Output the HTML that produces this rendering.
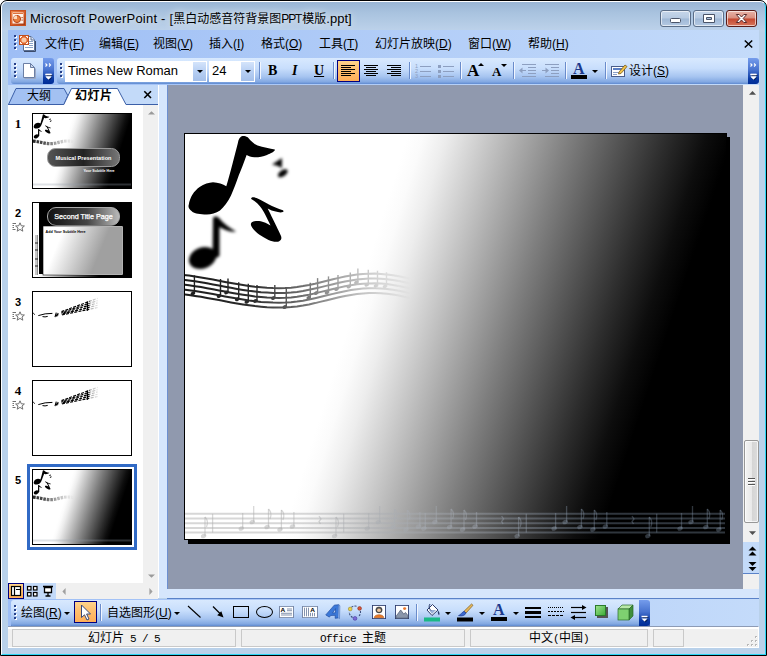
<!DOCTYPE html>
<html lang="zh-CN">
<head>
<meta charset="utf-8">
<title>Microsoft PowerPoint - [黑白动感音符背景图PPT模版.ppt]</title>
<style>
*{box-sizing:border-box;margin:0;padding:0}
html,body{width:767px;height:656px;overflow:hidden;background:#fff}
body{position:relative;font-family:"Liberation Sans","Noto Sans CJK SC",sans-serif;font-size:12px;color:#000}
.abs{position:absolute}
#frame{position:absolute;left:0;top:0;width:767px;height:656px;border:1px solid #000;border-radius:7px 7px 0 0;
 background:linear-gradient(#98b4d4 0px,#a9c3df 12px,#bdd2ea 30px,#b9d1ea 31px);overflow:hidden}
#frame:before{content:"";position:absolute;left:0;top:0;right:0;bottom:0;border:1px solid #fff;border-right-color:#2ad6f5;border-bottom-color:#2ad6f5;border-radius:6px 6px 0 0}
#title{text-shadow:0 0 7px rgba(255,255,255,.75),0 0 12px rgba(255,255,255,.5);left:30px;top:10px;font-size:12px;line-height:18px;white-space:nowrap;letter-spacing:0px}
.cap{position:absolute;top:10px;height:17px;width:31px;border:1px solid #5b6e88;border-radius:3px;
 background:linear-gradient(#c6d6ea 0,#b6cae2 48%,#9fb8d6 52%,#b4c9e2 100%);box-shadow:inset 0 0 0 1px rgba(255,255,255,.6)}
.cap.close{background:linear-gradient(#e8b4a8 0,#d98d7d 48%,#c4472f 52%,#d7765c 100%);border-color:#5a1c18}
#menubar{left:8px;top:30px;width:751px;height:28px;background:linear-gradient(90deg,#9ebef5,#c4dbfa)}
.mi{position:absolute;top:36px;font-size:12px;line-height:16px;white-space:nowrap}
.mi u{text-decoration:underline;text-underline-offset:1px}
#tbdock{left:8px;top:58px;width:751px;height:27px;background:linear-gradient(90deg,#9ebef5,#c4dbfa)}
.tb{position:absolute;top:58px;height:26px;border-radius:3px 0 0 3px;background:linear-gradient(#d8e9fe 0,#c8defc 40%,#a6c4f0 72%,#82a8e2 92%,#5f8ad0 100%)}
.ovf{position:absolute;top:58px;height:26px;width:11px;border-radius:0 3px 3px 0;background:linear-gradient(#759cec 0,#4873cf 45%,#0a3aa4 80%,#002d96 100%)}
.grip{position:absolute;width:3px}
.grip i{display:block;width:2px;height:2px;background:#27418a;margin-bottom:2px;box-shadow:1px 1px 0 #fff}
.sep{position:absolute;width:1px;background:#6a8ccb;box-shadow:1px 0 0 #f1f6ff}
#work{left:167px;top:85px;width:576px;height:504px;background:#9099ae;border-left:1px solid #6d8fd0}
#status{left:8px;top:626px;width:751px;height:22px;background:#f0f0f0;border-top:1px solid #8d9bb5;border-bottom:1px solid #fff;border-right:1px solid #fff;box-shadow:inset 0 2px 0 #fff}
.sp{position:absolute;top:629px;height:18px;border:1px solid #c9c9c9;font-size:12px;line-height:16px;text-align:center;white-space:nowrap}

.btnsel{position:absolute;border:1px solid #000080;background:linear-gradient(#ffd48c,#ffc171 40%,#ffae58)}
.ic{position:absolute;overflow:visible}
.combo{position:absolute;top:61px;height:21px;background:#fff;border:1px solid #fff}
.cbtn{position:absolute;top:62px;height:19px;width:13px;background:linear-gradient(#d4e4fb,#b7cff3 50%,#a5c0ea);}
.arr{position:absolute;width:0;height:0;border-left:3px solid transparent;border-right:3px solid transparent;border-top:3px solid #000}
.tbt{position:absolute;white-space:nowrap;font-size:12px;line-height:16px}
#lp{left:8px;top:85px;width:150px;height:513px;background:#fff}
#tabstrip{left:8px;top:85px;width:150px;height:20px;background:#c3daf9;border-bottom:1px solid #3b5fa8}
#split{left:158px;top:85px;width:9px;height:513px;background:#d6e6fc;border-left:1px solid #fff}
#lpsb{left:143px;top:105px;width:15px;height:478px;background:#f0f0f0}
.num{position:absolute;left:11px;width:14px;text-align:center;font-family:"Liberation Serif",serif;font-weight:bold;font-size:13px;line-height:14px}
.th{position:absolute;left:32px;width:100px;height:76px;border:1px solid #000;background:#fff;overflow:hidden}
#belowwork{left:167px;top:589px;width:592px;height:10px;background:#d6e6fc;border-bottom:1px solid #5a82c8}
#drawdock{left:8px;top:599px;width:751px;height:27px;background:linear-gradient(90deg,#9ebef5,#c4dbfa)}
#vsb{left:743px;top:85px;width:16px;height:504px;background:#f0f0f0}
.mono{font-family:"Liberation Mono","Noto Sans CJK SC",monospace;font-size:11px;letter-spacing:-.6px;white-space:pre}
.slidebg{background:conic-gradient(from 0deg at -4574.9px 15374.6px,rgb(255,255,255) 17.3343deg,rgb(251,251,251) 17.3893deg,rgb(237,237,237) 17.4663deg,rgb(127,127,127) 17.8846deg,rgb(44,44,44) 18.2148deg,rgb(13,13,13) 18.3469deg,rgb(0,0,0) 18.4349deg)}
.tbg{background:conic-gradient(from 0deg at -828.7px 2785.0px,rgb(255,255,255) 17.3343deg,rgb(251,251,251) 17.3893deg,rgb(237,237,237) 17.4663deg,rgb(127,127,127) 17.8846deg,rgb(44,44,44) 18.2148deg,rgb(13,13,13) 18.3469deg,rgb(0,0,0) 18.4349deg)}
#title .la{font-size:13px;letter-spacing:.22px}
</style>
</head>
<body>
<div id="frame"></div>
<!-- title bar -->
<div class="abs" id="title"><span class="la" id="t1">Microsoft PowerPoint - [</span><span id="t2">黑白动感音符背景图</span><span id="t3" style="letter-spacing:-1.1px">PPT</span><span id="t4" style="margin-left:1px">模版</span><span class="la" id="t5" style="letter-spacing:0">.ppt]</span></div>
<div class="cap" style="left:660px"></div>
<div class="cap" style="left:693px"></div>
<div class="cap close" style="left:726px"></div>
<svg class="ic" style="left:660px;top:10px" width="97" height="17" viewBox="0 0 97 17">
<rect x="10.5" y="8.5" width="10" height="4" rx="1" fill="#fff" stroke="#4a5468" stroke-width="1"/>
<path d="M43.5 4.5 H54.5 V12.5 H43.5 Z M46.5 7.5 V9.5 H51.5 V7.5 Z" fill="#fff" stroke="#4a5468" stroke-width="1" fill-rule="evenodd"/>
<path d="M76.3 4.5 H79.2 L81.5 7 L83.8 4.5 H86.7 L83.2 8.5 L86.7 12.5 H83.8 L81.5 10 L79.2 12.5 H76.3 L79.8 8.5 Z" fill="#fff" stroke="#5a2a2a" stroke-width="1" stroke-linejoin="round"/>
</svg>
<!-- menu bar -->
<div class="abs" id="menubar"></div>
<div class="mi" style="left:45px">文件(<u>F</u>)</div>
<div class="mi" style="left:99px">编辑(<u>E</u>)</div>
<div class="mi" style="left:153px">视图(<u>V</u>)</div>
<div class="mi" style="left:209px">插入(<u>I</u>)</div>
<div class="mi" style="left:261px">格式(<u>O</u>)</div>
<div class="mi" style="left:319px">工具(<u>T</u>)</div>
<div class="mi" style="left:375px">幻灯片放映(<u>D</u>)</div>
<div class="mi" style="left:468px">窗口(<u>W</u>)</div>
<div class="mi" style="left:528px">帮助(<u>H</u>)</div>
<!-- toolbar dock -->
<div class="abs" id="tbdock"></div>
<div class="tb" style="left:11px;width:32px"></div>
<div class="ovf" style="left:43px"></div>
<div class="tb" style="left:57px;width:691px"></div>
<div class="ovf" style="left:748px"></div>

<!-- toolbar items -->
<div class="grip" style="left:14px;top:35px"><i></i><i></i><i></i><i></i></div>
<div class="grip" style="left:14px;top:63px"><i></i><i></i><i></i><i></i></div>
<div class="grip" style="left:60px;top:63px"><i></i><i></i><i></i><i></i></div>
<svg class="ic" style="left:10px;top:10px" width="16" height="16" viewBox="0 0 16 16">
<defs><linearGradient id="pp" x1="0" y1="0" x2="1" y2="1"><stop offset="0" stop-color="#f08a4a"/><stop offset=".5" stop-color="#d9602b"/><stop offset="1" stop-color="#9a3410"/></linearGradient></defs><rect x="0" y="0" width="16" height="16" fill="url(#pp)"/><rect x="0.5" y="0.5" width="15" height="15" fill="none" stroke="#c8501e" stroke-width="1"/>
<rect x="2.5" y="2.5" width="11" height="11" fill="#fff4ea"/><rect x="3" y="3" width="10" height="1" fill="#e0723a"/>
<circle cx="7" cy="9" r="3.6" fill="#e8803f" stroke="#b6461a" stroke-width="1"/><path d="M7 9 L7 5.4 A3.6 3.6 0 0 0 3.4 9 Z" fill="#fbd9bd"/>
<rect x="11.5" y="7" width="1.2" height="1.2" fill="#b6461a"/><rect x="11.5" y="9.5" width="1.2" height="1.2" fill="#b6461a"/>
</svg>
<svg class="ic" style="left:19px;top:35px" width="17" height="17" viewBox="0 0 17 17">
<path d="M4.5 1.5 H12 L15.5 5 V15.5 H4.5 Z" fill="#fff" stroke="#5a6f94" stroke-width="1"/><path d="M12 1.5 V5 H15.5" fill="#dfe8f6" stroke="#5a6f94" stroke-width="1"/>
<path d="M5 16.5 H16.5 V6" fill="none" stroke="#3b4b6b" stroke-width="1"/>
<g stroke="#8aa2c8" stroke-width="1"><path d="M10 6.5 H14 M10 8.5 H14 M10 10.5 H14 M6 12.5 H14"/></g>
<rect x="0.5" y="0.5" width="9" height="9" fill="#e0672f" stroke="#c0501f"/><circle cx="5" cy="5" r="2.6" fill="#f7c9a8"/>
<path d="M1.5 3 V1.5 H3 M7 1.5 H8.5 V3 M8.5 7 V8.5 H7 M3 8.5 H1.5 V7" fill="none" stroke="#fff" stroke-width="1"/>
</svg>
<svg class="ic" style="left:744px;top:40px" width="9" height="8" viewBox="0 0 9 8"><path d="M0.8 0.5 L8.2 7.5 M8.2 0.5 L0.8 7.5" stroke="#000" stroke-width="1.5"/></svg>
<svg class="ic" style="left:22px;top:62px" width="14" height="17" viewBox="0 0 14 17">
<path d="M1.5 1.5 H8.5 L12.5 5.5 V15.5 H1.5 Z" fill="#fff" stroke="#6b7fa5" stroke-width="1"/><path d="M8.5 1.5 V5.5 H12.5 Z" fill="#cdd9ee" stroke="#6b7fa5" stroke-width="1"/>
<path d="M2.5 16.5 H13.5 V6.5" fill="none" stroke="#9aa8c4" stroke-width="1"/></svg>
<svg class="ic" style="left:43px;top:58px" width="11" height="26" viewBox="0 0 11 26"><path d="M2.5 5.5 L4 7 L2.5 8.5 M6 5.5 L7.5 7 L6 8.5" fill="none" stroke="#fff" stroke-width="1.1"/><path d="M2.5 16.5 H8.5" stroke="#fff" stroke-width="1.4"/><path d="M2.5 18.5 H8.5 L5.5 21.5 Z" fill="#fff"/><path d="M3.5 17.5 H9.5" stroke="#000" stroke-width="1" opacity=".55"/><path d="M3.5 19.5 H9.5 L6.5 22.5 Z" fill="#000" opacity=".35"/><path d="M2.5 16.5 H8.5" stroke="#fff" stroke-width="1.4"/><path d="M2.5 18.5 H8.5 L5.5 21.5 Z" fill="#fff"/></svg>
<svg class="ic" style="left:748px;top:58px" width="11" height="26" viewBox="0 0 11 26"><path d="M2.5 5.5 L4 7 L2.5 8.5 M6 5.5 L7.5 7 L6 8.5" fill="none" stroke="#fff" stroke-width="1.1"/><path d="M2.5 16.5 H8.5" stroke="#fff" stroke-width="1.4"/><path d="M2.5 18.5 H8.5 L5.5 21.5 Z" fill="#fff"/><path d="M3.5 17.5 H9.5" stroke="#000" stroke-width="1" opacity=".55"/><path d="M3.5 19.5 H9.5 L6.5 22.5 Z" fill="#000" opacity=".35"/><path d="M2.5 16.5 H8.5" stroke="#fff" stroke-width="1.4"/><path d="M2.5 18.5 H8.5 L5.5 21.5 Z" fill="#fff"/></svg>
<div class="combo" style="left:65px;width:142px"></div><div class="cbtn" style="left:193px"></div><div class="arr" style="left:197px;top:70px"></div>
<div class="tbt" id="fontname" style="left:68px;top:63px;font-size:13px">Times New Roman</div>
<div class="combo" style="left:209px;width:46px"></div><div class="cbtn" style="left:241px"></div><div class="arr" style="left:245px;top:70px"></div>
<div class="tbt" id="fontsize" style="left:212px;top:63px;font-size:13px">24</div>
<div class="sep" style="left:259px;top:62px;height:17px"></div>
<div class="tbt" style="left:268px;top:62px;font-family:'Liberation Serif',serif;font-weight:bold;font-size:14px;line-height:18px">B</div>
<div class="tbt" style="left:292px;top:62px;font-family:'Liberation Serif',serif;font-weight:bold;font-style:italic;font-size:14px;line-height:18px">I</div>
<div class="tbt" style="left:314px;top:62px;font-family:'Liberation Serif',serif;font-weight:bold;font-size:14px;line-height:18px;text-decoration:underline;text-underline-offset:1px">U</div>
<div class="sep" style="left:333px;top:62px;height:17px"></div>
<div class="btnsel" style="left:337px;top:60px;width:23px;height:22px"></div>
<svg class="ic" style="left:340px;top:64px" width="16" height="13" viewBox="0 0 16 13"><g stroke="#000" stroke-width="1"><path d="M1 1.5 H15"/><path d="M1 3.5 H11"/><path d="M1 5.5 H15"/><path d="M1 7.5 H11"/><path d="M1 9.5 H15"/><path d="M1 11.5 H11"/></g></svg>
<svg class="ic" style="left:363px;top:64px" width="16" height="13" viewBox="0 0 16 13"><g stroke="#000" stroke-width="1"><path d="M1 1.5 H15"/><path d="M3 3.5 H13"/><path d="M1 5.5 H15"/><path d="M3 7.5 H13"/><path d="M1 9.5 H15"/><path d="M3 11.5 H13"/></g></svg>
<svg class="ic" style="left:386px;top:64px" width="16" height="13" viewBox="0 0 16 13"><g stroke="#000" stroke-width="1"><path d="M1 1.5 H15"/><path d="M5 3.5 H15"/><path d="M1 5.5 H15"/><path d="M5 7.5 H15"/><path d="M1 9.5 H15"/><path d="M5 11.5 H15"/></g></svg>
<div class="sep" style="left:409px;top:62px;height:17px"></div>
<svg class="ic" style="left:415px;top:63px" width="17" height="16" viewBox="0 0 17 16"><g stroke="#8d9fc0" stroke-width="1"><path d="M5 3.5 H16 M5 8.5 H16 M5 13.5 H16"/></g>
<g fill="#8d9fc0" font-family="Liberation Sans,sans-serif" font-size="5.5"><text x="0" y="5">1</text><text x="0" y="10">2</text><text x="0" y="15">3</text></g></svg>
<svg class="ic" style="left:438px;top:63px" width="17" height="16" viewBox="0 0 17 16"><g stroke="#8d9fc0" stroke-width="1"><path d="M5 3.5 H16 M5 8.5 H16 M5 13.5 H16"/></g>
<g fill="#8d9fc0"><rect x="0" y="2" width="3" height="3"/><rect x="0" y="7" width="3" height="3"/><rect x="0" y="12" width="3" height="3"/></g></svg>
<div class="sep" style="left:460px;top:62px;height:17px"></div>
<div class="tbt" style="left:467px;top:60px;font-family:'Liberation Serif',serif;font-weight:bold;font-size:17px;line-height:22px">A</div><div class="arr" style="left:478px;top:63px;border-top:0;border-bottom:3px solid #000"></div>
<div class="tbt" style="left:492px;top:63px;font-family:'Liberation Serif',serif;font-weight:bold;font-size:13px;line-height:18px">A</div><div class="arr" style="left:501px;top:64px"></div>
<div class="sep" style="left:513px;top:62px;height:17px"></div>
<svg class="ic" style="left:519px;top:63px" width="18" height="16" viewBox="0 0 18 16"><g stroke="#8d9fc0" stroke-width="1"><path d="M3 1.5 H17 M9 4.5 H17 M9 7.5 H17 M9 10.5 H17 M3 13.5 H17"/></g><path d="M7 7.5 H1" stroke="#8d9fc0"/><path d="M0 7.5 L3.5 4.5 V10.5 Z" fill="#8d9fc0"/></svg>
<svg class="ic" style="left:542px;top:63px" width="18" height="16" viewBox="0 0 18 16"><g stroke="#8d9fc0" stroke-width="1"><path d="M3 1.5 H17 M9 4.5 H17 M9 7.5 H17 M9 10.5 H17 M3 13.5 H17"/></g><path d="M0 7.5 H6" stroke="#8d9fc0"/><path d="M7 7.5 L3.5 4.5 V10.5 Z" fill="#8d9fc0"/></svg>
<div class="sep" style="left:565px;top:62px;height:17px"></div>
<div class="tbt" style="left:573px;top:59px;font-family:'Liberation Serif',serif;font-weight:bold;font-size:16px;line-height:20px;color:#1c3a8c">A</div><div class="abs" style="left:571px;top:75px;width:16px;height:4px;background:#000"></div><div class="arr" style="left:592px;top:70px"></div>
<div class="sep" style="left:605px;top:62px;height:17px"></div>
<svg class="ic" style="left:611px;top:63px" width="17" height="15" viewBox="0 0 17 15"><rect x="0.5" y="3.5" width="13" height="10" fill="#fff" stroke="#4a5d8a"/><rect x="2" y="5" width="10" height="2" fill="#5b7fc4"/><path d="M2 9.5 H8 M2 11.5 H6" stroke="#8aa0c8"/>
<path d="M8 9 L14 2 L16 3.5 L10 10.5 L7.5 11 Z" fill="#f2c44d" stroke="#7a5a17" stroke-width=".8"/></svg>
<div class="tbt" style="left:629px;top:63px">设计(<u>S</u>)</div>
<!-- left panel -->
<div class="abs" id="lp"></div>
<div class="abs" id="tabstrip"></div>
<svg class="ic" style="left:8px;top:85px" width="150" height="21" viewBox="0 0 150 21">
<path d="M0.5 19.5 L8 3.5 H56 L59.8 10.5 L56 19.5 Z" fill="#a3c1f2" stroke="#3b5fa8" stroke-width="1"/>
<path d="M55.5 20.5 L63.5 3.5 H109.5 L118 19.5 H150 V21 H55 Z" fill="#fff"/>
<path d="M55.8 19.5 L63.5 3.5 H109.5 L118 19.5 H150" fill="none" stroke="#3b5fa8" stroke-width="1"/>
<path d="M136.3 6.3 L143 13 M143 6.3 L136.3 13" stroke="#000" stroke-width="1.6"/>
</svg>
<div class="tbt" style="left:27px;top:88px;font-size:12px;line-height:16px">大纲</div>
<div class="tbt" style="left:75px;top:88px;font-size:12px;line-height:16px;font-weight:bold;letter-spacing:.5px">幻灯片</div>
<div class="abs" id="split"></div>
<div class="abs" id="lpsb"></div>
<svg class="ic" style="left:148px;top:111px" width="7" height="4" viewBox="0 0 8 5" preserveAspectRatio="none"><path d="M0 4.5 L4 0.3 L8 4.5 Z" fill="#9a9a9a"/></svg>
<svg class="ic" style="left:148px;top:574px" width="7" height="4" viewBox="0 0 8 5" preserveAspectRatio="none"><path d="M0 0.5 L4 4.7 L8 0.5 Z" fill="#9a9a9a"/></svg>
<div class="num" style="top:117px">1</div>
<div class="num" style="top:206px;font-family:'Liberation Sans',sans-serif;font-size:11px">2</div>
<div class="num" style="top:295px;font-family:'Liberation Sans',sans-serif;font-size:11px">3</div>
<div class="num" style="top:384px">4</div>
<div class="num" style="top:473px;font-family:'Liberation Sans',sans-serif;font-size:11px">5</div>
<svg class="ic" style="left:12px;top:222px" width="13" height="10" viewBox="0 0 13 10"><g stroke="#707070" stroke-width="1" fill="none"><path d="M0.5 1.5 H4 M0.5 3.5 H2 M0.5 5.5 H2 M0.5 7.5 H3.5"/><path d="M8 0.8 L9.3 3.8 L12.4 4 L10 6 L10.8 9.2 L8 7.4 L5.2 9.2 L6 6 L3.6 4 L6.7 3.8 Z" fill="#fff"/></g></svg>
<svg class="ic" style="left:12px;top:311px" width="13" height="10" viewBox="0 0 13 10"><g stroke="#707070" stroke-width="1" fill="none"><path d="M0.5 1.5 H4 M0.5 3.5 H2 M0.5 5.5 H2 M0.5 7.5 H3.5"/><path d="M8 0.8 L9.3 3.8 L12.4 4 L10 6 L10.8 9.2 L8 7.4 L5.2 9.2 L6 6 L3.6 4 L6.7 3.8 Z" fill="#fff"/></g></svg>
<svg class="ic" style="left:12px;top:400px" width="13" height="10" viewBox="0 0 13 10"><g stroke="#707070" stroke-width="1" fill="none"><path d="M0.5 1.5 H4 M0.5 3.5 H2 M0.5 5.5 H2 M0.5 7.5 H3.5"/><path d="M8 0.8 L9.3 3.8 L12.4 4 L10 6 L10.8 9.2 L8 7.4 L5.2 9.2 L6 6 L3.6 4 L6.7 3.8 Z" fill="#fff"/></g></svg>
<!-- thumbnails -->
<svg class="ic" style="left:0;top:0" width="0" height="0"><defs><linearGradient id="tw" gradientUnits="userSpaceOnUse" x1="0" y1="0" x2="41" y2="0"><stop offset="0" stop-color="#222"/><stop offset=".3" stop-color="#444" stop-opacity=".9"/><stop offset=".6" stop-color="#777" stop-opacity=".6"/><stop offset="1" stop-color="#999" stop-opacity="0"/></linearGradient><linearGradient id="pg1" x1="0" y1="0" x2="1" y2="0"><stop offset="0" stop-color="#555"/><stop offset=".5" stop-color="#222"/><stop offset="1" stop-color="#777"/></linearGradient><linearGradient id="pg2" x1="0" y1="0" x2="1" y2="0"><stop offset="0" stop-color="#111"/><stop offset=".55" stop-color="#444"/><stop offset="1" stop-color="#bbb"/></linearGradient><linearGradient id="cg2" x1="0" y1="0" x2="1" y2=".25"><stop offset="0" stop-color="#fff"/><stop offset=".25" stop-color="#fff"/><stop offset=".8" stop-color="#a0a0a0"/><stop offset="1" stop-color="#a0a0a0"/></linearGradient><linearGradient id="sg" gradientUnits="userSpaceOnUse" x1="28" y1="0" x2="65" y2="0"><stop offset="0" stop-color="#000"/><stop offset=".74" stop-color="#000"/><stop offset=".8" stop-color="#000" stop-opacity=".35"/><stop offset="1" stop-color="#000" stop-opacity=".08"/></linearGradient></defs></svg>
<div class="th" style="top:113px"><div class="abs tbg" style="left:0;top:0;width:98px;height:74px"></div><svg class="ic" style="left:0;top:0" width="98" height="74" viewBox="0 0 98 74"><use href="#nts" transform="scale(.1811)"/><path d="M0 27.2 C6 27.4 11 29.6 17 29.7 C23 29.8 28 27.2 34 27 C37 26.9 39 27.2 41 27.6" fill="none" stroke="url(#tw)" stroke-width="3.2" stroke-dasharray="2.6 .9"/><path d="M0 70.6 H98" stroke="rgba(150,160,172,.3)" stroke-width="2"/><rect x="14.5" y="34.5" width="72" height="18" rx="8" fill="url(#pg1)" stroke="#9a9a9a" stroke-width="1"/><text x="50.5" y="45.6" text-anchor="middle" font-family="Liberation Sans,sans-serif" font-weight="bold" font-size="5.6" fill="#fff">Musical Presentation</text><text x="66" y="58" text-anchor="middle" font-family="Liberation Sans,sans-serif" font-weight="bold" font-size="3.6" fill="#fff">Your Subtitle Here</text></svg></div>
<div class="th" style="top:202px;background:#000"><svg class="ic" style="left:0;top:0" width="98" height="74" viewBox="0 0 98 74"><rect x="0" y="0" width="6" height="74" fill="#fff"/><rect x="6" y="71" width="60" height="3" fill="url(#bt2)"/><path d="M3 32 V72 M4.5 32 V72" stroke="#666" stroke-width=".7"/><path d="M2 40h3M2 47h3M2 56h3M2 63h3" stroke="#222" stroke-width="1"/><rect x="14.5" y="4.5" width="72" height="18" rx="8.5" fill="url(#pg2)" stroke="#aaa" stroke-width="1"/><text x="50.5" y="16.3" text-anchor="middle" font-family="Liberation Sans,sans-serif" font-size="7.2" fill="#fff" stroke="#fff" stroke-width=".25">Second Title Page</text><rect x="10.5" y="23.5" width="79" height="48" fill="url(#cg2)" stroke="#fff" stroke-width="1"/><rect x="10" y="23" width="80" height="49" fill="none" stroke="#000" stroke-width=".6"/><text x="12.5" y="29.5" font-family="Liberation Sans,sans-serif" font-weight="bold" font-size="3.7" fill="#000">Add Your Subtitle Here</text><defs><linearGradient id="bt2" x1="0" y1="0" x2="1" y2="0"><stop offset="0" stop-color="#fff"/><stop offset="1" stop-color="#000"/></linearGradient></defs></svg></div>
<div class="th" style="top:291px"><svg class="ic" style="left:0;top:0" width="98" height="74" viewBox="0 0 98 74"><g fill="none" stroke="url(#sg)" stroke-width="1.15"><path d="M28.5 19.6 Q45 13.6 64.8 6.3" stroke-dasharray="3 1.2" stroke-dashoffset="0.0"/><path d="M28.5 20.5 Q45 15.1 64.8 8.6" stroke-dasharray="3 1.2" stroke-dashoffset="0.9"/><path d="M28.5 21.3 Q45 16.6 64.8 10.9" stroke-dasharray="3 1.2" stroke-dashoffset="1.8"/><path d="M28.5 22.2 Q45 18.1 64.8 13.2" stroke-dasharray="3 1.2" stroke-dashoffset="2.7"/><path d="M28.5 23.0 Q45 19.6 64.8 15.5" stroke-dasharray="3 1.2" stroke-dashoffset="3.6"/></g><path d="M0.2 21 l1.6 1.6 M5.3 23.6 Q12 21.2 19.4 21.4 M9.5 24.6 Q12 25.3 14.7 24.4" stroke="#000" stroke-width="1" fill="none"/><path d="M22 25.2 l1.3 -4.6 M23.6 24.6 l1.6 -3.6 M22.4 23.4 l3 -.6" stroke="#000" stroke-width="1.1" fill="none"/><path d="M54.4 9.4 V18.8" stroke="#000" stroke-width="1.4"/></svg></div>
<div class="th" style="top:380px"><svg class="ic" style="left:0;top:0" width="98" height="74" viewBox="0 0 98 74"><g fill="none" stroke="url(#sg)" stroke-width="1.15"><path d="M28.5 19.6 Q45 13.6 64.8 6.3" stroke-dasharray="3 1.2" stroke-dashoffset="0.0"/><path d="M28.5 20.5 Q45 15.1 64.8 8.6" stroke-dasharray="3 1.2" stroke-dashoffset="0.9"/><path d="M28.5 21.3 Q45 16.6 64.8 10.9" stroke-dasharray="3 1.2" stroke-dashoffset="1.8"/><path d="M28.5 22.2 Q45 18.1 64.8 13.2" stroke-dasharray="3 1.2" stroke-dashoffset="2.7"/><path d="M28.5 23.0 Q45 19.6 64.8 15.5" stroke-dasharray="3 1.2" stroke-dashoffset="3.6"/></g><path d="M0.2 21 l1.6 1.6 M5.3 23.6 Q12 21.2 19.4 21.4 M9.5 24.6 Q12 25.3 14.7 24.4" stroke="#000" stroke-width="1" fill="none"/><path d="M22 25.2 l1.3 -4.6 M23.6 24.6 l1.6 -3.6 M22.4 23.4 l3 -.6" stroke="#000" stroke-width="1.1" fill="none"/><path d="M54.4 9.4 V18.8" stroke="#000" stroke-width="1.4"/></svg></div>
<div class="abs" style="left:27px;top:464px;width:110px;height:86px;border:3px solid #316ac5;background:#fff"></div>
<div class="th" style="top:469px"><div class="abs tbg" style="left:0;top:0;width:98px;height:74px"></div><svg class="ic" style="left:0;top:0" width="98" height="74" viewBox="0 0 98 74"><use href="#nts" transform="scale(.1811)"/><path d="M0 27.2 C6 27.4 11 29.6 17 29.7 C23 29.8 28 27.2 34 27 C37 26.9 39 27.2 41 27.6" fill="none" stroke="url(#tw)" stroke-width="3.2" stroke-dasharray="2.6 .9"/><path d="M0 70.6 H98" stroke="rgba(150,160,172,.3)" stroke-width="2"/></svg></div>
<!-- workspace -->
<div class="abs" id="work"></div>

<!-- slide -->
<div class="abs" style="left:188px;top:137px;width:542px;height:407px;background:#000"></div>
<div class="abs" style="left:184px;top:133px;width:543px;height:407px;background:#000"></div>
<div class="abs slidebg" style="left:185px;top:134px;width:541px;height:405px"></div>
<svg id="slidesvg" class="ic" style="left:185px;top:134px;overflow:hidden" width="541" height="405" viewBox="0 0 541 405">
<defs>
<filter id="b1" x="-30%" y="-30%" width="160%" height="160%"><feGaussianBlur stdDeviation="1.5"/></filter>
<filter id="b2" x="-20%" y="-20%" width="140%" height="140%"><feGaussianBlur stdDeviation="0.6"/></filter>
<filter id="b3" x="-5%" y="-30%" width="110%" height="160%"><feGaussianBlur stdDeviation="0.45"/></filter>
<linearGradient id="fade" gradientUnits="userSpaceOnUse" x1="0" y1="0" x2="225" y2="0"><stop offset="0" stop-color="#fff"/><stop offset=".3" stop-color="#eee"/><stop offset=".55" stop-color="#999"/><stop offset=".78" stop-color="#444"/><stop offset="1" stop-color="#000"/></linearGradient>
<linearGradient id="bs" gradientUnits="userSpaceOnUse" x1="100" y1="0" x2="420" y2="0"><stop offset="0" stop-color="#b0b0b0" stop-opacity=".5"/><stop offset=".6" stop-color="#a2a9b3" stop-opacity=".42"/><stop offset="1" stop-color="#8395aa" stop-opacity=".36"/></linearGradient>
<mask id="fm" maskUnits="userSpaceOnUse" x="-5" y="120" width="240" height="70"><rect x="-5" y="120" width="240" height="70" fill="url(#fade)"/></mask>
</defs>
<g id="nts">
<path fill="#000" filter="url(#b2)" d="M41.3 52.2 C45 40 50 20 53 8.4 C54 3 57 1.5 59.3 2.1 C61 2.5 62 3 63.2 3.7 C66 7 69 10 72.6 11.5 C78 13.5 85 14.5 89.8 15.4 C90.5 17 86 19.5 82 20.9 C78 22.5 73 23.5 69.4 23.3 C66 23 63.5 22 61.6 20.9 C59 28 56 36 53.8 41.3 C51 49 48.5 56 46 61.6 C43 68 39 73 35 76.5 C30 80 24 81 19.3 80.4 C13 80 8.5 79 6.8 77.2 C4 75 3 73 3.7 71 C5 63 9 57 14.6 53 C19 50 24 48.5 28 48.3 C33 48.5 38 50 41.3 52.2 Z"/>
<path fill="#000" filter="url(#b2)" d="M66.6 63.7 C68 62.6 70.5 63.6 72.6 64.5 C76 66 80 68.3 83.5 70.3 C88 72.6 93 74.6 97.9 76.2 C98.8 76.8 98.6 77.8 97.9 78.1 C96.3 78.6 94.5 78.5 92.9 78.1 C90.6 77.6 88.5 77.1 86.6 76.5 L82.7 74.6 C84 77 85.5 80 86.6 82.5 C88 85.5 90 89 91.3 91.9 C93 95.5 94.8 99 96 102 C96.6 103.5 96.5 105 95.7 105.9 C94.5 107.3 93 107.9 91.3 107.8 C88.5 107.6 86 107 83.5 105.9 C80 104.3 77 102.5 74.1 100.5 C71.5 98.5 69 96 67.1 93.4 C66 92 65.6 90.5 66 89.5 C66.5 88 68 87.4 69.4 87.2 C71.5 86.9 73.5 86.9 75.7 87.2 C78 87.6 80 88.5 81.9 89.5 L85.5 91.4 C84 88 82 84 80.4 80.9 C79 78 77 75 74.9 72.3 C73.2 70.2 71.2 68.5 69.4 67.1 C68.3 66.3 67.3 65.8 66.6 65.3 C66 64.7 66 64.1 66.6 63.7 Z"/>
<g filter="url(#b1)" fill="#000"><ellipse cx="17.5" cy="124" rx="14" ry="10.5" transform="rotate(-22 17.5 124)"/><path d="M27.5 126 L28 84 C29 82 32 82 34 84 C38 89 44 94 51 97.5 C47 98.5 41 97 34.5 93 L34.5 122 Z"/></g>
<g filter="url(#b1)" fill="#000"><path d="M87 30.5 L97 24 L96.8 34 L92.5 31.8 Z"/><ellipse cx="97.8" cy="39.2" rx="5.6" ry="3" transform="rotate(-35 97.8 39.2)"/></g>
</g>
<g mask="url(#fm)"><g filter="url(#b3)">
<g fill="none" stroke="#1c1c1c" stroke-width="2">
<path d="M-2 140.9 L4 141.6 L10 142.5 L16 143.4 L22 144.5 L28 145.6 L34 146.7 L40 147.9 L46 149.0 L52 150.0 L58 151.0 L64 151.9 L70 152.7 L76 153.3 L82 153.8 L88 154.1 L94 154.2 L100 154.1 L106 153.7 L112 153.0 L118 152.1 L124 151.0 L130 149.7 L136 148.2 L142 146.8 L148 145.3 L154 143.9 L160 142.6 L166 141.5 L172 140.6 L178 140.0 L184 139.7 L190 139.6 L196 139.9 L202 140.4 L208 141.2 L214 142.2 L220 143.5 L226 144.8"/>
<path d="M-2 145.7 L4 146.5 L10 147.3 L16 148.3 L22 149.3 L28 150.4 L34 151.6 L40 152.7 L46 153.8 L52 154.9 L58 155.9 L64 156.8 L70 157.5 L76 158.2 L82 158.6 L88 158.9 L94 159.0 L100 158.9 L106 158.6 L112 157.9 L118 157.0 L124 155.8 L130 154.5 L136 153.1 L142 151.6 L148 150.2 L154 148.8 L160 147.5 L166 146.4 L172 145.5 L178 144.9 L184 144.5 L190 144.5 L196 144.7 L202 145.3 L208 146.1 L214 147.1 L220 148.3 L226 149.7"/>
<path d="M-2 150.6 L4 151.3 L10 152.2 L16 153.1 L22 154.2 L28 155.3 L34 156.4 L40 157.6 L46 158.7 L52 159.7 L58 160.7 L64 161.6 L70 162.4 L76 163.0 L82 163.5 L88 163.8 L94 163.9 L100 163.8 L106 163.4 L112 162.7 L118 161.8 L124 160.7 L130 159.4 L136 157.9 L142 156.5 L148 155.0 L154 153.6 L160 152.3 L166 151.2 L172 150.3 L178 149.7 L184 149.4 L190 149.3 L196 149.6 L202 150.1 L208 150.9 L214 151.9 L220 153.2 L226 154.5"/>
<path d="M-2 155.4 L4 156.2 L10 157.0 L16 158.0 L22 159.0 L28 160.1 L34 161.3 L40 162.4 L46 163.5 L52 164.6 L58 165.6 L64 166.5 L70 167.2 L76 167.9 L82 168.3 L88 168.6 L94 168.7 L100 168.6 L106 168.3 L112 167.6 L118 166.7 L124 165.5 L130 164.2 L136 162.8 L142 161.3 L148 159.9 L154 158.5 L160 157.2 L166 156.1 L172 155.2 L178 154.6 L184 154.2 L190 154.2 L196 154.4 L202 155.0 L208 155.8 L214 156.8 L220 158.0 L226 159.4"/>
<path d="M-2 160.3 L4 161.0 L10 161.9 L16 162.8 L22 163.9 L28 165.0 L34 166.1 L40 167.3 L46 168.4 L52 169.4 L58 170.4 L64 171.3 L70 172.1 L76 172.7 L82 173.2 L88 173.5 L94 173.6 L100 173.5 L106 173.1 L112 172.4 L118 171.5 L124 170.4 L130 169.1 L136 167.6 L142 166.2 L148 164.7 L154 163.3 L160 162.0 L166 160.9 L172 160.0 L178 159.4 L184 159.1 L190 159.0 L196 159.3 L202 159.8 L208 160.6 L214 161.6 L220 162.9 L226 164.2"/>
</g>
<g stroke="#1c1c1c" stroke-width="1.4" fill="#1c1c1c">
<path d="M9.4 141.4 V159.4"/><ellipse cx="7.9" cy="159.4" rx="2.4" ry="1.8" transform="rotate(-25 7.9 159.4)" stroke="none"/>
<path d="M35.5 145.0 V162.0"/><ellipse cx="34.0" cy="162.0" rx="2.4" ry="1.8" transform="rotate(-25 34.0 162.0)" stroke="none"/>
<path d="M43.0 144.4 V158.4"/><ellipse cx="41.5" cy="158.4" rx="2.4" ry="1.8" transform="rotate(-25 41.5 158.4)" stroke="none"/>
<path d="M53.7 148.3 V165.3"/><ellipse cx="52.2" cy="165.3" rx="2.4" ry="1.8" transform="rotate(-25 52.2 165.3)" stroke="none"/>
<path d="M63.3 149.8 V167.8"/><ellipse cx="61.8" cy="167.8" rx="2.4" ry="1.8" transform="rotate(-25 61.8 167.8)" stroke="none"/>
<path d="M72.0 150.9 V166.9"/><ellipse cx="70.5" cy="166.9" rx="2.4" ry="1.8" transform="rotate(-25 70.5 166.9)" stroke="none"/>
<path d="M89.8 151.1 V164.1"/><ellipse cx="88.3" cy="164.1" rx="2.4" ry="1.8" transform="rotate(-25 88.3 164.1)" stroke="none"/>
<path d="M101.3 153.0 V173.0"/><ellipse cx="99.8" cy="173.0" rx="2.4" ry="1.8" transform="rotate(-25 99.8 173.0)" stroke="none"/>
<path d="M125.3 148.7 V163.7"/><ellipse cx="123.8" cy="163.7" rx="2.4" ry="1.8" transform="rotate(-25 123.8 163.7)" stroke="none"/>
<path d="M132.6 144.1 V159.1"/><ellipse cx="131.1" cy="159.1" rx="2.4" ry="1.8" transform="rotate(-25 131.1 159.1)" stroke="none"/>
<path d="M143.5 142.4 V158.4"/><ellipse cx="142.0" cy="158.4" rx="2.4" ry="1.8" transform="rotate(-25 142.0 158.4)" stroke="none"/>
<path d="M153.0 141.1 V155.1"/><ellipse cx="151.5" cy="155.1" rx="2.4" ry="1.8" transform="rotate(-25 151.5 155.1)" stroke="none"/>
<path d="M165.3 138.6 V152.6"/><ellipse cx="163.8" cy="152.6" rx="2.4" ry="1.8" transform="rotate(-25 163.8 152.6)" stroke="none"/>
<path d="M172.9 134.5 V148.5"/><ellipse cx="171.4" cy="148.5" rx="2.4" ry="1.8" transform="rotate(-25 171.4 148.5)" stroke="none"/>
<path d="M183.3 135.7 V150.7"/><ellipse cx="181.8" cy="150.7" rx="2.4" ry="1.8" transform="rotate(-25 181.8 150.7)" stroke="none"/>
<path d="M192.5 136.7 V151.7"/><ellipse cx="191.0" cy="151.7" rx="2.4" ry="1.8" transform="rotate(-25 191.0 151.7)" stroke="none"/>
<path d="M201.5 138.3 V152.3"/><ellipse cx="200.0" cy="152.3" rx="2.4" ry="1.8" transform="rotate(-25 200.0 152.3)" stroke="none"/>
</g></g></g>
<g filter="url(#b3)"><g stroke="url(#bs)" stroke-width="2" fill="none">
<path d="M0 379.8 H540"/>
<path d="M0 384.5 H540"/>
<path d="M0 389.2 H540"/>
<path d="M0 393.9 H540"/>
<path d="M0 398.6 H540"/>
</g>
<g stroke="url(#bs)" stroke-width="1.3" fill="url(#bs)">
<path d="M20.0 383.0 V402.0" fill="none"/><ellipse cx="18.6" cy="402.0" rx="2.8" ry="2.1" transform="rotate(-25 18.6 402.0)" stroke="none"/><path d="M20.0 383.0 q4 4 1.5 10" fill="none"/><path d="M27.6 379.8 V398.6" fill="none"/><path d="M57.7 379.0 V394.5" fill="none"/><ellipse cx="56.3" cy="394.5" rx="2.8" ry="2.1" transform="rotate(-25 56.3 394.5)" stroke="none"/><path d="M68.7 372.0 V388.0" fill="none"/><ellipse cx="67.3" cy="388.0" rx="2.8" ry="2.1" transform="rotate(-25 67.3 388.0)" stroke="none"/><path d="M83.5 375.0 V393.0" fill="none"/><ellipse cx="82.1" cy="393.0" rx="2.8" ry="2.1" transform="rotate(-25 82.1 393.0)" stroke="none"/><path d="M83.5 375.0 q4 4 1.5 10" fill="none"/><path d="M96.4 376.0 V395.5" fill="none"/><ellipse cx="95.0" cy="395.5" rx="2.8" ry="2.1" transform="rotate(-25 95.0 395.5)" stroke="none"/><path d="M96.4 376.0 q4 4 1.5 10" fill="none"/><path d="M108.9 378.0 V392.5" fill="none"/><ellipse cx="107.5" cy="392.5" rx="2.8" ry="2.1" transform="rotate(-25 107.5 392.5)" stroke="none"/><path d="M134.0 382.0 l2 3 l-2 2.5 l1.5 2.5" fill="none"/><path d="M151.0 383.0 V402.0" fill="none"/><ellipse cx="149.6" cy="402.0" rx="2.8" ry="2.1" transform="rotate(-25 149.6 402.0)" stroke="none"/><path d="M151.0 383.0 q4 4 1.5 10" fill="none"/><path d="M158.7 379.8 V398.6" fill="none"/><path d="M183.7 379.0 V394.5" fill="none"/><ellipse cx="182.3" cy="394.5" rx="2.8" ry="2.1" transform="rotate(-25 182.3 394.5)" stroke="none"/><path d="M194.7 372.0 V388.0" fill="none"/><ellipse cx="193.3" cy="388.0" rx="2.8" ry="2.1" transform="rotate(-25 193.3 388.0)" stroke="none"/><path d="M209.5 375.0 V393.0" fill="none"/><ellipse cx="208.1" cy="393.0" rx="2.8" ry="2.1" transform="rotate(-25 208.1 393.0)" stroke="none"/><path d="M209.5 375.0 q4 4 1.5 10" fill="none"/><path d="M222.4 376.0 V395.5" fill="none"/><ellipse cx="221.0" cy="395.5" rx="2.8" ry="2.1" transform="rotate(-25 221.0 395.5)" stroke="none"/><path d="M222.4 376.0 q4 4 1.5 10" fill="none"/><path d="M234.9 378.0 V392.5" fill="none"/><ellipse cx="233.5" cy="392.5" rx="2.8" ry="2.1" transform="rotate(-25 233.5 392.5)" stroke="none"/>
<path d="M240.3 379.0 V394.5" fill="none"/><ellipse cx="238.9" cy="394.5" rx="2.8" ry="2.1" transform="rotate(-25 238.9 394.5)" stroke="none"/><path d="M251.3 372.0 V388.0" fill="none"/><ellipse cx="249.9" cy="388.0" rx="2.8" ry="2.1" transform="rotate(-25 249.9 388.0)" stroke="none"/><path d="M266.1 375.0 V393.0" fill="none"/><ellipse cx="264.7" cy="393.0" rx="2.8" ry="2.1" transform="rotate(-25 264.7 393.0)" stroke="none"/><path d="M266.1 375.0 q4 4 1.5 10" fill="none"/><path d="M279.0 376.0 V395.5" fill="none"/><ellipse cx="277.6" cy="395.5" rx="2.8" ry="2.1" transform="rotate(-25 277.6 395.5)" stroke="none"/><path d="M279.0 376.0 q4 4 1.5 10" fill="none"/><path d="M291.5 378.0 V392.5" fill="none"/><ellipse cx="290.1" cy="392.5" rx="2.8" ry="2.1" transform="rotate(-25 290.1 392.5)" stroke="none"/><path d="M316.6 382.0 l2 3 l-2 2.5 l1.5 2.5" fill="none"/><path d="M333.6 383.0 V402.0" fill="none"/><ellipse cx="332.2" cy="402.0" rx="2.8" ry="2.1" transform="rotate(-25 332.2 402.0)" stroke="none"/><path d="M333.6 383.0 q4 4 1.5 10" fill="none"/><path d="M341.3 379.8 V398.6" fill="none"/>
<path d="M370.6 379.0 V394.5" fill="none"/><ellipse cx="369.2" cy="394.5" rx="2.8" ry="2.1" transform="rotate(-25 369.2 394.5)" stroke="none"/><path d="M381.6 372.0 V388.0" fill="none"/><ellipse cx="380.2" cy="388.0" rx="2.8" ry="2.1" transform="rotate(-25 380.2 388.0)" stroke="none"/><path d="M396.4 375.0 V393.0" fill="none"/><ellipse cx="395.0" cy="393.0" rx="2.8" ry="2.1" transform="rotate(-25 395.0 393.0)" stroke="none"/><path d="M396.4 375.0 q4 4 1.5 10" fill="none"/><path d="M409.3 376.0 V395.5" fill="none"/><ellipse cx="407.9" cy="395.5" rx="2.8" ry="2.1" transform="rotate(-25 407.9 395.5)" stroke="none"/><path d="M409.3 376.0 q4 4 1.5 10" fill="none"/><path d="M421.8 378.0 V392.5" fill="none"/><ellipse cx="420.4" cy="392.5" rx="2.8" ry="2.1" transform="rotate(-25 420.4 392.5)" stroke="none"/><path d="M447.0 382.0 l2 3 l-2 2.5 l1.5 2.5" fill="none"/><path d="M464.3 383.0 V402.0" fill="none"/><ellipse cx="462.9" cy="402.0" rx="2.8" ry="2.1" transform="rotate(-25 462.9 402.0)" stroke="none"/><path d="M464.3 383.0 q4 4 1.5 10" fill="none"/><path d="M471.7 379.8 V398.6" fill="none"/><path d="M496.5 379.0 V394.5" fill="none"/><ellipse cx="495.1" cy="394.5" rx="2.8" ry="2.1" transform="rotate(-25 495.1 394.5)" stroke="none"/><path d="M507.5 372.0 V388.0" fill="none"/><ellipse cx="506.1" cy="388.0" rx="2.8" ry="2.1" transform="rotate(-25 506.1 388.0)" stroke="none"/><path d="M522.3 375.0 V393.0" fill="none"/><ellipse cx="520.9" cy="393.0" rx="2.8" ry="2.1" transform="rotate(-25 520.9 393.0)" stroke="none"/><path d="M522.3 375.0 q4 4 1.5 10" fill="none"/><path d="M535.2 376.0 V395.5" fill="none"/><ellipse cx="533.8" cy="395.5" rx="2.8" ry="2.1" transform="rotate(-25 533.8 395.5)" stroke="none"/><path d="M535.2 376.0 q4 4 1.5 10" fill="none"/>
</g></g>
</svg>
<!-- right scrollbar -->
<div class="abs" id="vsb"></div>
<svg class="ic" style="left:749px;top:91px" width="7" height="4" viewBox="0 0 7 4"><path d="M0 3.8 L3.5 0.1 L7 3.8 Z" fill="#505050"/></svg>
<div class="abs" style="left:744px;top:440px;width:15px;height:83px;border:1px solid #979797;border-radius:2px;background:linear-gradient(90deg,#f4f4f4,#e9e9e9 50%,#d5d5d5 55%,#dcdcdc);box-shadow:inset 0 0 0 1px rgba(255,255,255,.7)"></div>
<div class="abs" style="left:748px;top:478px;width:7px;height:8px;background:linear-gradient(#555 0,#555 1px,#fff 1px,#fff 2px,transparent 2px,transparent 3px,#555 3px,#555 4px,#fff 4px,#fff 5px,transparent 5px,transparent 6px,#555 6px,#555 7px,#fff 7px,#fff 8px)"></div>
<svg class="ic" style="left:749px;top:531px" width="7" height="4" viewBox="0 0 7 4"><path d="M0 0.2 L3.5 3.9 L7 0.2 Z" fill="#505050"/></svg>
<div class="abs" style="left:743px;top:542px;width:16px;height:32px;background:#c3daf9;border-bottom:1px solid #5a82c8"></div>
<svg class="ic" style="left:747.5px;top:546px" width="9" height="26" viewBox="0 0 9 26"><path d="M0.5 4.5 L4.5 0.5 L8.5 4.5 Z M0.5 9.5 L4.5 5.5 L8.5 9.5 Z M0.5 16 L4.5 20 L8.5 16 Z M0.5 21 L4.5 25 L8.5 21 Z" fill="#000"/></svg>
<div class="abs" id="belowwork"></div>
<div class="abs" style="left:8px;top:583px;width:150px;height:16px;background:#f0f0f0"></div>
<div class="abs" style="left:8px;top:583px;width:48px;height:16px;background:#c3daf9"></div>
<div class="btnsel" style="left:8px;top:583px;width:16px;height:16px"></div>
<svg class="ic" style="left:8px;top:583px" width="48" height="16" viewBox="0 0 48 16">
<rect x="3.5" y="3.5" width="9" height="9" fill="#fff" stroke="#000" stroke-width="1.2"/><path d="M6.5 3.5 V12.5 M8 6.5 H12" stroke="#000" stroke-width="1.2"/>
<g fill="#fff" stroke="#000" stroke-width="1.2"><rect x="19.5" y="3.5" width="3.5" height="3.5"/><rect x="25.5" y="3.5" width="3.5" height="3.5"/><rect x="19.5" y="9.5" width="3.5" height="3.5"/><rect x="25.5" y="9.5" width="3.5" height="3.5"/></g>
<path d="M35 3.5 H45 M36.5 4.5 H43.5 V9.5 H36.5 Z M40 9.5 V12.5 M37.5 13 H42.5" fill="#fff" stroke="#000" stroke-width="1.3"/>
</svg>
<svg class="ic" style="left:62px;top:588px" width="4" height="7" viewBox="0 0 5 9" preserveAspectRatio="none"><path d="M4.5 0 L0.5 4.5 L4.5 9 Z" fill="#a0a0a0"/></svg>
<svg class="ic" style="left:149px;top:588px" width="4" height="7" viewBox="0 0 5 9" preserveAspectRatio="none"><path d="M0.5 0 L4.5 4.5 L0.5 9 Z" fill="#a0a0a0"/></svg>
<!-- drawing toolbar -->
<div class="abs" id="drawdock"></div>
<div class="tb" style="left:11px;top:600px;width:628px;box-shadow:0 1px 0 #4068b4"></div>
<div class="ovf" style="left:639px;top:600px;box-shadow:0 1px 0 #00237a"></div>
<svg class="ic" style="left:639px;top:600px" width="11" height="26" viewBox="0 0 11 26"><path d="M3.5 17.5 H9.5" stroke="#000" stroke-width="1" opacity=".5"/><path d="M3.5 19.5 H9.5 L6.5 22.5 Z" fill="#000" opacity=".4"/><path d="M2.5 16.5 H8.5" stroke="#fff" stroke-width="1.4"/><path d="M2.5 18.5 H8.5 L5.5 21.5 Z" fill="#fff"/></svg>
<div class="grip" style="left:14px;top:605px"><i></i><i></i><i></i><i></i></div>
<div class="tbt" style="left:21px;top:605px">绘图(<u>R</u>)</div><div class="arr" style="left:64px;top:612px"></div>
<div class="btnsel" style="left:74px;top:601px;width:23px;height:22px"></div>
<svg class="ic" style="left:80px;top:604px" width="12" height="17" viewBox="0 0 12 17"><path d="M1.5 1 V13.5 L4.5 10.8 L7 16 L9 15 L6.6 10 H10.5 Z" fill="#fff" stroke="#3a4a7a" stroke-width="1"/></svg>
<div class="sep" style="left:100px;top:604px;height:17px"></div>
<div class="tbt" style="left:107px;top:605px">自选图形(<u>U</u>)</div><div class="arr" style="left:174px;top:612px"></div>
<svg class="ic" style="left:187px;top:605px" width="15" height="14" viewBox="0 0 15 14"><path d="M1 1 L13.5 12.5" stroke="#000" stroke-width="1.1"/></svg>
<svg class="ic" style="left:212px;top:605px" width="13" height="14" viewBox="0 0 13 14"><path d="M1 1.5 L9 9.5" stroke="#000" stroke-width="1.3"/><path d="M11.5 12.5 L5.2 10.3 L9.3 6.2 Z" fill="#000"/></svg>
<div class="abs" style="left:233px;top:606px;width:16px;height:12px;border:1px solid #000"></div>
<div class="abs" style="left:256px;top:606px;width:17px;height:12px;border:1px solid #000;border-radius:50%"></div>
<svg class="ic" style="left:279px;top:606px" width="15" height="12" viewBox="0 0 15 14" preserveAspectRatio="none"><rect x="0.5" y="0.5" width="14" height="13" fill="#fff" stroke="#7a8aa8"/><path d="M8 3.5 H13 M8 5.5 H13 M2 8.5 H13 M2 10.5 H13" stroke="#7a8aa8"/><text x="1.6" y="6.8" font-family="Liberation Sans,sans-serif" font-weight="bold" font-size="6.5" fill="#000">A</text></svg>
<svg class="ic" style="left:302px;top:606px" width="16" height="12" viewBox="0 0 16 14" preserveAspectRatio="none"><rect x="0.5" y="0.5" width="15" height="13" fill="#fff" stroke="#7a8aa8"/><path d="M2.5 2 V12 M4.5 2 V12 M6.5 2 V12 M8.5 8 V12 M10.5 8 V12 M12.5 8 V12" stroke="#7a8aa8"/><text x="8.3" y="6.8" font-family="Liberation Sans,sans-serif" font-weight="bold" font-size="6.5" fill="#000">A</text></svg>
<svg class="ic" style="left:324px;top:603px" width="17" height="17" viewBox="0 0 19 20" preserveAspectRatio="none"><path d="M2 14 L11.5 2.5 L16.5 2 L16 17.5 L12.5 18 L12.6 14.5 L7.5 14.6 L6 16.6 Z M9.5 11.8 L12.7 11.6 L12.9 6.6 Z" fill="#3b78d8" stroke="#1c4aa0" stroke-width=".8" fill-rule="evenodd"/><path d="M16.5 2 L17.8 3.2 L17.3 18.4 L16 17.5" fill="#9cc0f4" stroke="#1c4aa0" stroke-width=".5"/></svg>
<svg class="ic" style="left:347px;top:604px" width="16" height="17" viewBox="0 0 16 17"><path d="M4.5 3.2 A6 6 0 0 1 10.5 2.6 M13.4 7 A6 6 0 0 1 11.2 12.8 M5.6 13.4 A6 6 0 0 1 2.2 8" fill="none" stroke="#3d4f7d" stroke-width="1.1" stroke-dasharray="2 1.2"/><circle cx="3.2" cy="5" r="1.9" fill="#e8d04a" stroke="#8a7a20" stroke-width=".5"/><circle cx="12.6" cy="4.4" r="1.9" fill="#d8553a" stroke="#7a2a18" stroke-width=".5"/><circle cx="8" cy="14.4" r="1.9" fill="#7a6ad8" stroke="#3a2a90" stroke-width=".5"/></svg>
<svg class="ic" style="left:372px;top:605px" width="14" height="14" viewBox="0 0 16 17" preserveAspectRatio="none"><rect x="0.5" y="0.5" width="15" height="16" fill="#fff" stroke="#2a3a6a"/><circle cx="8" cy="6" r="3.6" fill="#555" stroke="#222" stroke-width=".6"/><circle cx="8" cy="6.4" r="2.2" fill="#f0c8a0"/><path d="M2.5 15.5 C2.5 10.5 13.5 10.5 13.5 15.5 Z" fill="#e87a28" stroke="#a04a10" stroke-width=".6"/></svg>
<svg class="ic" style="left:395px;top:605px" width="14" height="14" viewBox="0 0 16 17" preserveAspectRatio="none"><rect x="0.5" y="0.5" width="15" height="16" fill="#fff" stroke="#2a3a6a"/><circle cx="11" cy="4.4" r="1.8" fill="#e8762a"/><path d="M1 14 L6.5 6 L10 11 L12 9 L15 13 V16 H1 Z" fill="#8a96aa" stroke="#3a4560" stroke-width=".7"/></svg>
<div class="sep" style="left:416px;top:604px;height:17px"></div>
<svg class="ic" style="left:423px;top:603px" width="18" height="19" viewBox="0 0 18 19"><path d="M4 7 L9.5 1.5 L15 7 L9 12.5 Z" fill="#fff" stroke="#2a3a6a" stroke-width="1"/><path d="M6 7 H13 L9 11 Z" fill="#9ab0d8"/><path d="M7 1 C5.5 3 6 6 8 7.5" fill="none" stroke="#2a3a6a"/><path d="M15 7.5 C16.5 9 17 11 16 12.2 C14.8 11 14.6 9.3 15 7.5 Z" fill="#2a3a6a"/><rect x="1" y="14.5" width="16" height="4" fill="#19b886"/></svg>
<div class="arr" style="left:445px;top:612px"></div>
<svg class="ic" style="left:456px;top:603px" width="18" height="19" viewBox="0 0 18 19"><path d="M15.5 1 L17 2.3 L10 10 L8 8.3 Z" fill="#e8b85a" stroke="#7a5a1a" stroke-width=".7"/><path d="M8 8.3 L10 10 C9 12.5 6 13.5 2.5 12.6 C5 11.8 5.5 9.5 8 8.3 Z" fill="#3b6ad0" stroke="#1c3a90" stroke-width=".7"/><rect x="1" y="14.5" width="16" height="4" fill="#000"/></svg>
<div class="arr" style="left:479px;top:612px"></div>
<div class="tbt" style="left:493px;top:600px;font-family:'Liberation Serif',serif;font-weight:bold;font-size:16px;line-height:20px;color:#1c3a8c">A</div><div class="abs" style="left:491px;top:617px;width:16px;height:4px;background:#000"></div><div class="arr" style="left:513px;top:612px"></div>
<div class="abs" style="left:525px;top:607px;width:16px;height:11px;background:linear-gradient(#000 0,#000 2px,transparent 2px,transparent 4px,#000 4px,#000 7px,transparent 7px,transparent 9px,#000 9px,#000 11px)"></div>
<svg class="ic" style="left:548px;top:606px" width="16" height="12" viewBox="0 0 16 12"><g stroke="#000" stroke-width="1"><path d="M0 1.5 H16" stroke-dasharray="1 1"/><path d="M0 5.5 H16" stroke-dasharray="2 1"/><path d="M0 9.5 H16" stroke-dasharray="3 1"/></g></svg>
<svg class="ic" style="left:570px;top:604px" width="17" height="17" viewBox="0 0 17 17"><g stroke="#000" stroke-width="1.2" fill="none"><path d="M1 3.5 H13"/><path d="M1 8.5 H16"/><path d="M4 13.5 H16"/></g><path d="M16.5 3.5 L12 1 V6 Z M0.5 13.5 L5 11 V16 Z" fill="#000"/></svg>
<div class="abs" style="left:597px;top:607px;width:11px;height:11px;background:#555"></div><div class="abs" style="left:595px;top:605px;width:11px;height:11px;background:linear-gradient(135deg,#9be08a,#3fae3a);border:1px solid #2a7a2a"></div>
<svg class="ic" style="left:617px;top:604px" width="17" height="17" viewBox="0 0 17 17"><path d="M1 5 L5 1 H16 L12 5 Z" fill="#b8e8a8" stroke="#2a6a2a" stroke-width=".7"/><path d="M12 5 L16 1 V12 L12 16 Z" fill="#3f8e3a" stroke="#2a6a2a" stroke-width=".7"/><rect x="1" y="5" width="11" height="11" fill="#7ed070" stroke="#2a6a2a" stroke-width=".7"/></svg>
<!-- status -->
<div class="abs" id="status"></div>
<div class="sp" style="left:12px;width:224px">幻灯片<span class="mono"> 5 / 5</span></div>
<div class="sp" style="left:241px;width:224px"><span class="mono">Office </span>主题</div>
<div class="sp" style="left:470px;width:178px">中文<span class="mono">(</span>中国<span class="mono">)</span></div>
<div class="sp" style="left:653px;width:31px"></div>
<svg class="ic" style="left:747px;top:636px" width="11" height="11" viewBox="0 0 11 11"><g fill="#b8b8b8"><rect x="8" y="0" width="2" height="2"/><rect x="4" y="4" width="2" height="2"/><rect x="8" y="4" width="2" height="2"/><rect x="0" y="8" width="2" height="2"/><rect x="4" y="8" width="2" height="2"/><rect x="8" y="8" width="2" height="2"/></g><g fill="#fff"><rect x="9" y="1" width="1" height="1"/><rect x="5" y="5" width="1" height="1"/><rect x="9" y="5" width="1" height="1"/><rect x="1" y="9" width="1" height="1"/><rect x="5" y="9" width="1" height="1"/><rect x="9" y="9" width="1" height="1"/></g></svg>
</body>
</html>
